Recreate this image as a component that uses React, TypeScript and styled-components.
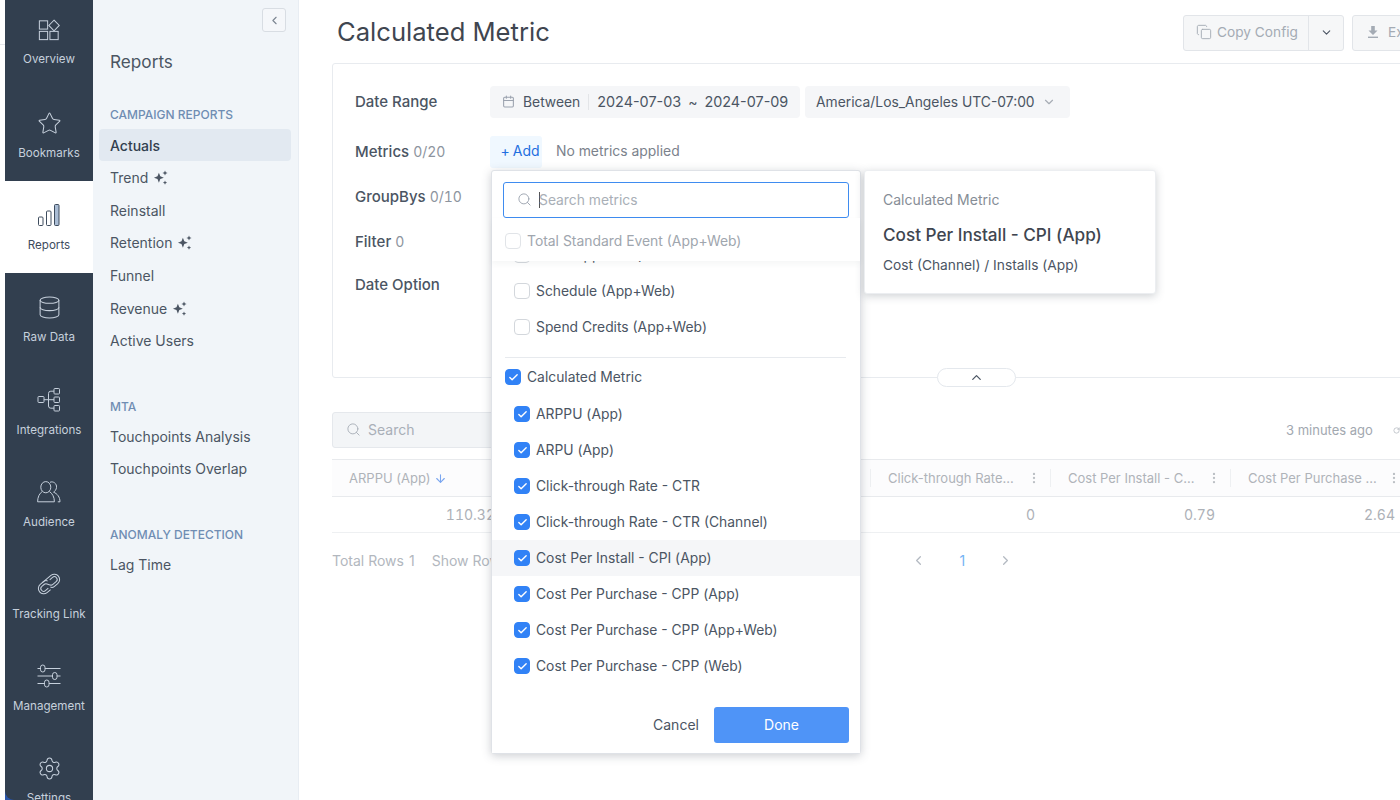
import React from 'react';
import styled, { createGlobalStyle } from 'styled-components';
import {
  Calendar,
  Check,
  ChevronDown,
  ChevronLeft,
  ChevronRight,
  ChevronUp,
  Copy,
  Database,
  EllipsisVertical,
  ArrowDown,
  RotateCw,
  Search,
  Settings,
  Star,
} from 'lucide-react';

const GlobalStyle = createGlobalStyle`
  html, body {
    margin: 0;
    padding: 0;
    height: 800px;
    overflow: hidden;
    background: #fff;
    font-family: Inter, "Liberation Sans", sans-serif;
  }
  * { box-sizing: border-box; }
`;

const OverviewIcon = () => (
  <svg width="22" height="22" viewBox="0 0 24 24" fill="none" stroke="currentColor" strokeWidth="1.1">
    <rect x="1.5" y="2" width="9" height="9" />
    <path d="M17.5 1.2 L23.2 7 L17.5 12.8 L11.8 7 Z" />
    <rect x="1.5" y="13.5" width="9" height="9" />
    <rect x="13" y="13.5" width="9" height="9" />
  </svg>
);

const BarsIcon = () => (
  <svg width="24" height="24" viewBox="0 0 24 24" fill="none" stroke="#3e4c5e" strokeWidth="1">
    <rect x="1.5" y="14" width="4.5" height="8.5" rx="1" />
    <rect x="9.5" y="8" width="4.5" height="14.5" rx="1" />
    <rect x="17.5" y="1.5" width="4.5" height="21" rx="1" fill="#a9bcd4" />
  </svg>
);

const IntegrationsIcon = () => (
  <svg width="24" height="24" viewBox="0 0 24 24" fill="none" stroke="currentColor" strokeWidth="1">
    <rect x="1" y="8.5" width="6" height="6" rx="0.8" />
    <rect x="17" y="0.5" width="5.5" height="5.5" rx="0.8" />
    <rect x="17" y="9" width="5.5" height="5.5" rx="0.8" />
    <rect x="17" y="17.5" width="5.5" height="5.5" rx="0.8" />
    <path d="M7 11.7 H17 M11.5 11.7 V5.5 Q11.5 3.2 13.8 3.2 H17 M11.5 11.7 V18 Q11.5 20.2 13.8 20.2 H17" />
  </svg>
);

const AudienceIcon = () => (
  <svg width="24" height="22" viewBox="0 0 24 22" fill="none" stroke="currentColor" strokeWidth="1">
    <ellipse cx="8.8" cy="6.2" rx="5" ry="5.6" />
    <path d="M5.2 10.5 C2.5 12.5 0.6 16 0.6 20.8 H17.4 C17.4 16 15.4 12.5 12.4 10.5" />
    <path d="M13 1.3 C16 -0.2 20 2.5 19.5 6.5 C19.3 8.5 18 10.3 16.6 11.2 C20.2 12.6 23 16 23 20.8 H20.8" />
  </svg>
);

const LinkIcon = () => (
  <svg width="26" height="26" viewBox="-2 -2 28 28" fill="none" stroke="currentColor" strokeWidth="1.1">
    <g transform="rotate(-40 12 12)">
      <path d="M7 6.3 H19.5 A5.7 5.7 0 0 1 19.5 17.7 H14.5 C12.5 17.7 11.6 16.6 11 15.5" />
      <path d="M9.5 17.7 H4.5 A5.7 5.7 0 0 1 4.5 6.3 H9.5 C11.5 6.3 12.4 7.4 13 8.5" />
      <path d="M4.5 9 H8 C11.5 9 11 15 14.5 15 H19.5 A3 3 0 0 0 19.5 9 H15.5" />
      <path d="M8.5 15 H4.5 A3 3 0 0 1 4.5 9" />
    </g>
  </svg>
);

const SlidersIcon = () => (
  <svg width="24" height="24" viewBox="0 0 24 24" fill="none" stroke="currentColor" strokeWidth="1">
    <path d="M0.5 4.5 H3.5 M8 4.5 H23.5" />
    <rect x="3.5" y="1" width="4.5" height="7" rx="2.25" />
    <path d="M0.5 12 H15.5 M20 12 H23.5" />
    <rect x="15.5" y="8.5" width="4.5" height="7" rx="2.25" />
    <path d="M0.5 19.5 H7.5 M12 19.5 H23.5" />
    <rect x="7.5" y="16" width="4.5" height="7" rx="2.25" />
  </svg>
);

const SparkleIcon = () => (
  <svg width="15" height="15" viewBox="0 0 14 14" fill="#4b5563">
    <path d="M5.5 2.6 L6.8 5.9 L10.1 7.2 L6.8 8.5 L5.5 11.8 L4.2 8.5 L0.9 7.2 L4.2 5.9 Z" />
    <path d="M11.2 0.4 L11.9 2.1 L13.6 2.8 L11.9 3.5 L11.2 5.2 L10.5 3.5 L8.8 2.8 L10.5 2.1 Z" />
    <path d="M11.2 9.8 L11.8 11.2 L13.2 11.8 L11.8 12.4 L11.2 13.8 L10.6 12.4 L9.2 11.8 L10.6 11.2 Z" />
  </svg>
);

const ExportIcon = () => (
  <svg width="14" height="14" viewBox="0 0 14 14" fill="currentColor">
    <path d="M5.2 1 H8.8 V5.5 H11.5 L7 10 L2.5 5.5 H5.2 Z" />
    <rect x="2" y="11.6" width="10" height="1.4" />
  </svg>
);

const Page = styled.div`
  display: flex;
  width: 1400px;
  height: 800px;
  overflow: hidden;
  position: relative;
`;

const EdgeStrip = styled.div`
  flex: 0 0 5px;
  background: #fff;
  position: relative;
  &::before {
    content: '';
    position: absolute;
    top: 44px;
    left: 0;
    right: 0;
    height: 1px;
    background: #e5e7eb;
  }
`;

const RailShell = styled.div`
  flex: 0 0 88px;
  height: 800px;
  background: #2a55a8;
`;

const Rail = styled.nav`
  height: 800px;
  background: #323f4f;
  border-bottom-left-radius: 9px;
  overflow: hidden;
  display: flex;
  flex-direction: column;
`;

const RailItem = styled.div<{ $active?: boolean; $first?: boolean }>`
  flex: 0 0 ${({ $first }) => ($first ? '92px' : '92.2px')};
  margin-top: ${({ $first }) => ($first ? '-3px' : '0')};
  display: flex;
  flex-direction: column;
  align-items: center;
  padding-top: ${({ $first }) => ($first ? '20px' : '21px')};
  background: ${({ $active }) => ($active ? '#fff' : 'transparent')};
  color: ${({ $active }) => ($active ? '#3e4c5e' : '#c6d0dc')};
`;

const RailIcon = styled.div`
  height: 26px;
  display: flex;
  align-items: center;
  justify-content: center;
`;

const RailLabel = styled.div<{ $first?: boolean }>`
  margin-top: ${({ $first }) => ($first ? '8px' : '9px')};
  font-size: 11.6px;
  line-height: 16px;
  white-space: nowrap;
`;

const Sidebar = styled.aside`
  flex: 0 0 206px;
  height: 800px;
  background: #f1f5f9;
  border-right: 1px solid #e8edf3;
  padding: 8px 7px 0 6px;
  display: flex;
  flex-direction: column;
`;

const CollapseButton = styled.button`
  align-self: flex-end;
  width: 24px;
  height: 24px;
  padding: 0;
  display: flex;
  align-items: center;
  justify-content: center;
  background: #f5f7fa;
  border: 1px solid #d8dde3;
  border-radius: 3px;
  color: #7b8591;
  margin-right: 5px;
`;

const SidebarTitle = styled.h2`
  margin: 17px 0 30px 11px;
  font-size: 17.2px;
  line-height: 26px;
  font-weight: 400;
  color: #4b5563;
`;

const GroupTitle = styled.div<{ $gap?: number }>`
  margin: ${({ $gap }) => $gap ?? 0}px 0 4px 11px;
  font-size: 12px;
  line-height: 20px;
  font-weight: 500;
  color: #6f8db3;
`;

const NavItem = styled.div<{ $active?: boolean }>`
  height: 32px;
  margin-bottom: 0.67px;
  display: flex;
  align-items: center;
  gap: 5px;
  padding-left: 11px;
  border-radius: 4px;
  font-size: 14px;
  font-weight: ${({ $active }) => ($active ? 500 : 400)};
  color: ${({ $active }) => ($active ? '#323f4f' : '#4b5563')};
  background: ${({ $active }) => ($active ? '#e2e9f1' : 'transparent')};
`;

const TightNavItem = styled(NavItem)`
  margin-bottom: 0;
`;

const Main = styled.main`
  flex: 1;
  min-width: 0;
  overflow: hidden;
  background: #fff;
  padding-left: 33px;
  position: relative;
`;

const Content = styled.div`
  width: 1140px;
`;

const Header = styled.header`
  height: 63px;
  display: flex;
  align-items: flex-start;
  justify-content: space-between;
  padding: 15px 0 0 5px;
`;

const Title = styled.h1`
  margin: 1px 0 0;
  font-size: 25.6px;
  line-height: 32px;
  font-weight: 400;
  color: #3f4650;
`;

const HeaderActions = styled.div`
  display: flex;
  gap: 8px;
  margin-left: auto;
`;

const ActionGroup = styled.div`
  display: flex;
  height: 36px;
  border: 1px solid #e2e5e9;
  border-radius: 3px;
  background: #f6f7f8;
  color: #a4abb4;
  font-size: 13.7px;
  overflow: hidden;
`;

const ActionPart = styled.div<{ $divider?: boolean; $width: number; $pad?: number; $gap?: number }>`
  width: ${({ $width }) => $width}px;
  display: flex;
  align-items: center;
  justify-content: ${({ $pad }) => ($pad ? 'flex-start' : 'center')};
  gap: ${({ $gap }) => $gap ?? 0}px;
  padding: 0 0 2px ${({ $pad }) => $pad ?? 0}px;
  border-left: ${({ $divider }) => ($divider ? '1px solid #e2e5e9' : 'none')};
`;

const Panel = styled.section`
  height: 315px;
  border: 1px solid #e8ebef;
  border-radius: 3px;
  padding: 22px 0 0 22px;
  position: relative;
`;

const FormRow = styled.div<{ $height: number }>`
  height: ${({ $height }) => $height}px;
  display: flex;
  align-items: flex-start;
`;

const FormLabel = styled.div`
  flex: 0 0 135px;
  line-height: 32px;
  font-size: 15px;
  font-weight: 500;
  color: #4b5563;
  span {
    font-size: 14px;
    font-weight: 400;
    font-variant-numeric: tabular-nums;
    color: #8d949e;
  }
`;

const DateChip = styled.div`
  height: 32px;
  display: flex;
  align-items: center;
  padding-bottom: 1px;
  background: #f5f6f8;
  border-radius: 4px;
  font-size: 13.85px;
  color: #4b5563;
  white-space: nowrap;
`;

const DateRangeChip = styled(DateChip)`
  width: 310px;
  padding-left: 12px;
  margin-right: 5px;
  svg { color: #9ca3af; margin-right: 8px; }
`;

const ChipDivider = styled.i`
  width: 1px;
  height: 16px;
  background: #e3e5e8;
  margin: 0 8px 0 8px;
`;

const DateText = styled.span`
  font-size: 14.4px;
`;

const Tilde = styled.span`
  margin: 0 7px;
  font-size: 14px;
`;

const ZoneChip = styled(DateChip)`
  width: 265px;
  padding-left: 11px;
  gap: 7px;
  svg { color: #a7adb5; }
`;

const AddButton = styled.div`
  width: 52px;
  height: 32px;
  display: flex;
  align-items: center;
  justify-content: center;
  padding: 0 0 3px 8px;
  background: #f0f8ff;
  border-radius: 3px;
  color: #1f6fe0;
  font-size: 14px;
  gap: 3px;
`;

const EmptyNote = styled.div`
  margin-left: 14px;
  line-height: 30px;
  font-size: 13.9px;
  color: #7b828c;
`;

const CollapseTab = styled.div`
  position: absolute;
  left: 604px;
  bottom: -10px;
  width: 79px;
  height: 19px;
  display: flex;
  align-items: center;
  justify-content: center;
  background: #fff;
  border: 1px solid #e4e8ed;
  border-radius: 10px;
  color: #4b5563;
`;

const SearchRow = styled.div`
  height: 36px;
  margin-top: 34px;
  display: flex;
  align-items: center;
  justify-content: space-between;
  padding-right: 72px;
`;

const TableSearch = styled.div`
  width: 300px;
  height: 36px;
  display: flex;
  align-items: center;
  gap: 7px;
  padding: 0 0 1px 13px;
  background: #f3f5f7;
  border: 1px solid #e5e8ec;
  border-radius: 3px;
  font-size: 14px;
  color: #a9afb7;
`;

const UpdatedAt = styled.div`
  display: flex;
  align-items: center;
  gap: 20px;
  width: 114px;
  font-size: 13px;
  color: #a2a8b0;
  white-space: nowrap;
`;

const HeaderRow = styled.div`
  margin-top: 11px;
  height: 38px;
  display: flex;
  background: #fcfcfd;
  border-top: 1px solid #e8eaed;
  border-bottom: 1px solid #e8eaed;
`;

const HeadCell = styled.div<{ $width: number; $divider?: boolean }>`
  flex: 0 0 ${({ $width }) => $width}px;
  display: flex;
  align-items: center;
  justify-content: space-between;
  padding: 0 9px 0 18px;
  font-size: 13px;
  color: #afb3b9;
  white-space: nowrap;
  position: relative;
  svg { color: #bcc0c5; }
  &::before {
    content: '';
    position: absolute;
    left: 0;
    top: 9px;
    bottom: 9px;
    width: 1px;
    background: ${({ $divider }) => ($divider ? '#eef0f2' : 'transparent')};
  }
`;

const SortLabel = styled.span`
  display: flex;
  align-items: center;
  gap: 3px;
  margin-left: -1px;
  svg { color: #7aa6f0; }
`;

const DataRow = styled.div`
  height: 36px;
  display: flex;
  border-bottom: 1px solid #eef0f2;
`;

const DataCell = styled.div<{ $width: number }>`
  flex: 0 0 ${({ $width }) => $width}px;
  padding-right: 15px;
  text-align: right;
  line-height: 35px;
  font-size: 14px;
  font-variant-numeric: tabular-nums;
  color: #adb1b7;
`;

const Footer = styled.div`
  height: 54px;
  display: flex;
  align-items: center;
  font-size: 14px;
  color: #b2b7be;
`;

const FooterText = styled.span`
  margin-right: 17px;
  b { font-weight: 400; margin-left: 5px; }
`;

const Pager = styled.div`
  margin-left: 386px;
  display: flex;
  align-items: center;
  color: #b4bac2;
`;

const PageNumber = styled.span`
  width: 72px;
  text-align: center;
  color: #74b4f5;
`;

const Dropdown = styled.div`
  position: absolute;
  left: 192px;
  top: 170px;
  width: 370px;
  height: 584px;
  background: #fff;
  border: 1px solid #dfe2e7;
  border-radius: 3px;
  box-shadow: 0 2px 10px rgba(60, 70, 85, 0.26);
  display: flex;
  flex-direction: column;
`;

const SearchField = styled.div`
  margin: 11px 11px 0;
  height: 36px;
  flex: 0 0 36px;
  display: flex;
  align-items: center;
  padding: 0 0 1px 13px;
  border: 1px solid #3f8cf0;
  border-radius: 3px;
  font-size: 13.85px;
  color: #a9afb7;
  svg { color: #9ca3af; margin-right: 7px; }
`;

const Caret = styled.i`
  width: 1px;
  height: 16px;
  background: #555;
  margin-right: -1px;
`;

const StickyRow = styled.div`
  height: 43px;
  flex: 0 0 43px;
  display: flex;
  align-items: center;
  padding: 2px 0 0 13px;
  gap: 6px;
  font-size: 13.9px;
  color: #a0a6ae;
  background: #fff;
  box-shadow: 0 3px 6px rgba(60, 70, 85, 0.05);
  position: relative;
  z-index: 1;
`;

const Scroller = styled.div`
  flex: 1;
  overflow: hidden;
  position: relative;
`;

const OptionRow = styled.div<{ $hover?: boolean; $parent?: boolean; $clipped?: boolean }>`
  height: 36px;
  display: flex;
  align-items: center;
  gap: 6px;
  padding-left: ${({ $parent }) => ($parent ? 13 : 22)}px;
  margin-top: ${({ $clipped }) => ($clipped ? '-24px' : '0')};
  margin-bottom: ${({ $parent }) => ($parent ? 1 : 0)}px;
  font-size: 13.85px;
  color: #4b5563;
  background: ${({ $hover }) => ($hover ? '#f5f6f8' : 'transparent')};
`;

const OptionDivider = styled.div`
  height: 1px;
  margin: 12px 14px 1px 13px;
  background: #e7eaee;
`;

const Box = styled.span<{ $checked?: boolean; $muted?: boolean }>`
  flex: 0 0 16px;
  width: 16px;
  height: 16px;
  display: flex;
  align-items: center;
  justify-content: center;
  border-radius: 4px;
  border: 1px solid ${({ $checked, $muted }) => ($checked ? '#3182f6' : $muted ? '#e1e4e8' : '#d3d7dc')};
  background: ${({ $checked }) => ($checked ? '#3182f6' : '#fff')};
  color: #fff;
`;

const DropdownFooter = styled.div`
  position: absolute;
  left: 0;
  right: 0;
  bottom: 0;
  height: 66px;
  display: flex;
  align-items: flex-start;
  justify-content: flex-end;
  gap: 14px;
  padding: 20px 11px 0 0;
  background: #fff;
`;

const CancelButton = styled.div`
  width: 48px;
  line-height: 35px;
  text-align: center;
  font-size: 14px;
  color: #4b5563;
`;

const DoneButton = styled.div`
  width: 135px;
  height: 36px;
  display: flex;
  align-items: center;
  justify-content: center;
  padding-bottom: 1px;
  background: #4f94f7;
  border-radius: 3px;
  color: #fff;
  font-size: 14px;
`;

const DetailCard = styled.div`
  position: absolute;
  left: 565px;
  top: 170px;
  width: 292px;
  height: 124px;
  padding: 20px 18px 0 18px;
  background: #fff;
  border: 1px solid #eceef1;
  border-radius: 3px;
  box-shadow: 0 2px 8px rgba(60, 70, 85, 0.25);
`;

const DetailKicker = styled.div`
  font-size: 14px;
  line-height: 18px;
  color: #868d96;
`;

const DetailName = styled.div`
  margin-top: 14px;
  font-size: 17.15px;
  line-height: 24px;
  font-weight: 500;
  color: #3f4650;
`;

const DetailFormula = styled.div`
  margin-top: 9px;
  font-size: 13.75px;
  line-height: 18px;
  color: #4b5563;
`;

const tick = <Check size={11} strokeWidth={3} />;

const options = [
  'ARPPU (App)',
  'ARPU (App)',
  'Click-through Rate - CTR',
  'Click-through Rate - CTR (Channel)',
  'Cost Per Install - CPI (App)',
  'Cost Per Purchase - CPP (App)',
  'Cost Per Purchase - CPP (App+Web)',
  'Cost Per Purchase - CPP (Web)',
];

const rail = [
  { label: 'Overview', icon: <OverviewIcon /> },
  { label: 'Bookmarks', icon: <Star size={25} strokeWidth={1} /> },
  { label: 'Reports', icon: <BarsIcon />, active: true },
  { label: 'Raw Data', icon: <Database size={25} strokeWidth={1} /> },
  { label: 'Integrations', icon: <IntegrationsIcon /> },
  { label: 'Audience', icon: <AudienceIcon /> },
  { label: 'Tracking Link', icon: <LinkIcon /> },
  { label: 'Management', icon: <SlidersIcon /> },
  { label: 'Settings', icon: <Settings size={25} strokeWidth={1} /> },
];

const columns = [
  { title: 'ARPPU (App)', width: 178, value: '110.32', sorted: true },
  { title: '', width: 180, value: '' },
  { title: '', width: 180, value: '' },
  { title: 'Click-through Rate...', width: 180, value: '0' },
  { title: 'Cost Per Install - C...', width: 180, value: '0.79' },
  { title: 'Cost Per Purchase ...', width: 180, value: '2.64' },
];

export default function App() {
  return (
    <Page>
      <GlobalStyle />
      <EdgeStrip />
      <RailShell>
        <Rail>
          {rail.map((item, i) => (
            <RailItem key={item.label} $active={item.active} $first={i === 0}>
              <RailIcon>{item.icon}</RailIcon>
              <RailLabel $first={i === 0}>{item.label}</RailLabel>
            </RailItem>
          ))}
        </Rail>
      </RailShell>
      <Sidebar>
        <CollapseButton>
          <ChevronLeft size={13} />
        </CollapseButton>
        <SidebarTitle>Reports</SidebarTitle>
        <GroupTitle>CAMPAIGN REPORTS</GroupTitle>
        <NavItem $active>Actuals</NavItem>
        <NavItem>Trend <SparkleIcon /></NavItem>
        <NavItem>Reinstall</NavItem>
        <NavItem>Retention <SparkleIcon /></NavItem>
        <NavItem>Funnel</NavItem>
        <NavItem>Revenue <SparkleIcon /></NavItem>
        <NavItem>Active Users</NavItem>
        <GroupTitle $gap={39}>MTA</GroupTitle>
        <TightNavItem>Touchpoints Analysis</TightNavItem>
        <TightNavItem>Touchpoints Overlap</TightNavItem>
        <GroupTitle $gap={40}>ANOMALY DETECTION</GroupTitle>
        <NavItem>Lag Time</NavItem>
      </Sidebar>
      <Main>
        <Content>
          <Header>
            <Title>Calculated Metric</Title>
            <HeaderActions>
              <ActionGroup>
                <ActionPart $width={124} $pad={12} $gap={5}>
                  <Copy size={16} strokeWidth={1.4} /> Copy Config
                </ActionPart>
                <ActionPart $width={35} $divider>
                  <ChevronDown size={13} color="#4b5563" />
                </ActionPart>
              </ActionGroup>
              <ActionGroup>
                <ActionPart $width={118} $pad={13} $gap={8}>
                  <ExportIcon /> Export
                </ActionPart>
              </ActionGroup>
            </HeaderActions>
          </Header>
          <Panel>
            <FormRow $height={50}>
              <FormLabel>Date Range</FormLabel>
              <DateRangeChip>
                <Calendar size={13} />
                Between
                <ChipDivider />
                <DateText>2024-07-03</DateText>
                <Tilde>~</Tilde>
                <DateText>2024-07-09</DateText>
              </DateRangeChip>
              <ZoneChip>
                America/Los_Angeles UTC-07:00
                <ChevronDown size={14} />
              </ZoneChip>
            </FormRow>
            <FormRow $height={45}>
              <FormLabel>
                Metrics <span>0/20</span>
              </FormLabel>
              <AddButton>
                <span>+</span>
                <span>Add</span>
              </AddButton>
              <EmptyNote>No metrics applied</EmptyNote>
            </FormRow>
            <FormRow $height={45}>
              <FormLabel>
                GroupBys <span>0/10</span>
              </FormLabel>
            </FormRow>
            <FormRow $height={43}>
              <FormLabel>
                Filter <span>0</span>
              </FormLabel>
            </FormRow>
            <FormRow $height={40}>
              <FormLabel>Date Option</FormLabel>
            </FormRow>
            <CollapseTab>
              <ChevronUp size={15} />
            </CollapseTab>
          </Panel>
          <SearchRow>
            <TableSearch>
              <Search size={15} strokeWidth={1.5} /> Search
            </TableSearch>
            <UpdatedAt>
              3 minutes ago
              <RotateCw size={11} />
            </UpdatedAt>
          </SearchRow>
          <HeaderRow>
            {columns.map((col, i) => (
              <HeadCell key={i} $width={col.width} $divider={i > 2}>
                {col.sorted ? (
                  <SortLabel>
                    {col.title}
                    <ArrowDown size={13} />
                  </SortLabel>
                ) : (
                  <span>{col.title}</span>
                )}
                {col.title && !col.sorted && <EllipsisVertical size={14} />}
              </HeadCell>
            ))}
          </HeaderRow>
          <DataRow>
            {columns.map((col, i) => (
              <DataCell key={i} $width={col.width}>
                {col.value}
              </DataCell>
            ))}
          </DataRow>
          <Footer>
            <FooterText>
              Total Rows<b>1</b>
            </FooterText>
            <FooterText>Show Rows</FooterText>
            <Pager>
              <ChevronLeft size={15} />
              <PageNumber>1</PageNumber>
              <ChevronRight size={15} />
            </Pager>
          </Footer>
        </Content>
        <Dropdown>
          <SearchField>
            <Search size={15} strokeWidth={1.5} />
            <Caret />
            Search metrics
          </SearchField>
          <StickyRow>
            <Box $muted />
            Total Standard Event (App+Web)
          </StickyRow>
          <Scroller>
            <OptionRow $clipped>
              <Box />
              Rate (App+Web)
            </OptionRow>
            <OptionRow>
              <Box />
              Schedule (App+Web)
            </OptionRow>
            <OptionRow>
              <Box />
              Spend Credits (App+Web)
            </OptionRow>
            <OptionDivider />
            <OptionRow $parent>
              <Box $checked>{tick}</Box>
              Calculated Metric
            </OptionRow>
            {options.map((name) => (
              <OptionRow key={name} $hover={name === 'Cost Per Install - CPI (App)'}>
                <Box $checked>{tick}</Box>
                {name}
              </OptionRow>
            ))}
          </Scroller>
          <DropdownFooter>
            <CancelButton>Cancel</CancelButton>
            <DoneButton>Done</DoneButton>
          </DropdownFooter>
        </Dropdown>
        <DetailCard>
          <DetailKicker>Calculated Metric</DetailKicker>
          <DetailName>Cost Per Install - CPI (App)</DetailName>
          <DetailFormula>Cost (Channel) / Installs (App)</DetailFormula>
        </DetailCard>
      </Main>
    </Page>
  );
}
